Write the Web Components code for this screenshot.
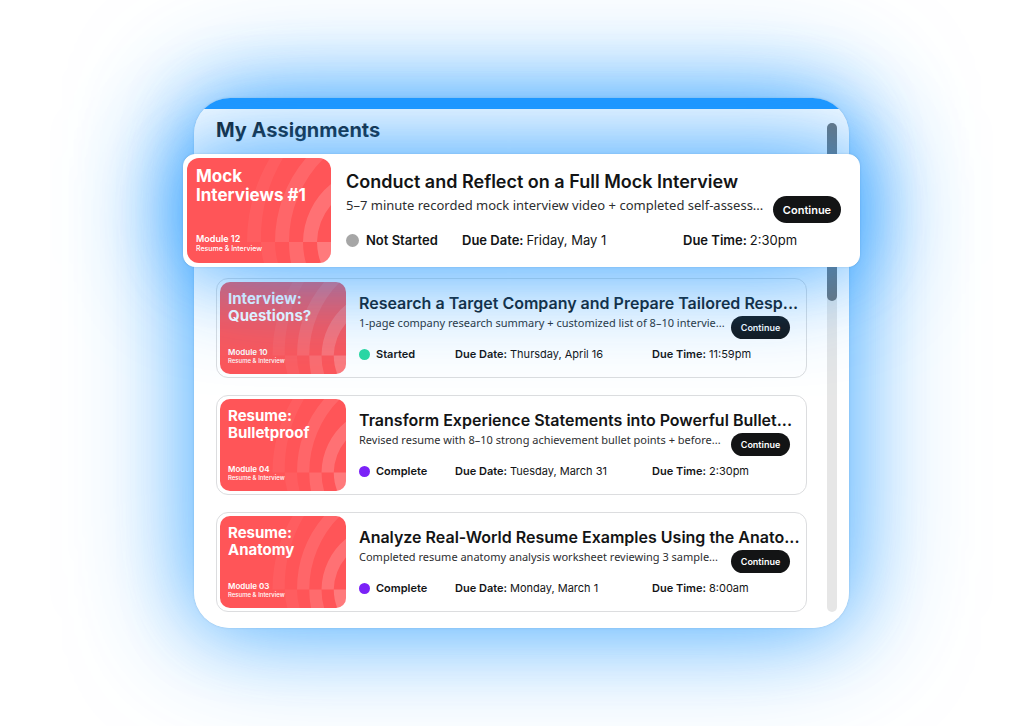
<!DOCTYPE html>
<html lang="en">
<head>
<meta charset="utf-8">
<meta name="viewport" content="width=device-width, initial-scale=1">
<title>My Assignments</title>
<style>
  html, body { margin: 0; min-height: 100%; }
  body { background: #fff; font-family: Inter, "Noto Sans", sans-serif; color: #131415; overflow-x: hidden; }
</style>
</head>
<body>
<assignments-page>
  <assignments-panel heading="My Assignments">
    <assignment-card slot="featured" featured status="Not Started" tone="idle" date="Friday, May 1" time="2:30pm" module="Module 12" track="Resume &amp; Interview">
      <span slot="cover">Mock<br>Interviews #1</span>
      <span slot="title">Conduct and Reflect on a Full Mock Interview</span>
      <span slot="summary">5–7 minute recorded mock interview video + completed self-assess...</span>
    </assignment-card>
    <assignment-card status="Started" tone="active" date="Thursday, April 16" time="11:59pm" module="Module 10" track="Resume &amp; Interview">
      <span slot="cover">Interview:<br>Questions?</span>
      <span slot="title">Research a Target Company and Prepare Tailored Resp...</span>
      <span slot="summary">1-page company research summary + customized list of 8–10 intervie...</span>
    </assignment-card>
    <assignment-card status="Complete" tone="done" date="Tuesday, March 31" time="2:30pm" module="Module 04" track="Resume &amp; Interview">
      <span slot="cover">Resume:<br>Bulletproof</span>
      <span slot="title">Transform Experience Statements into Powerful Bullet...</span>
      <span slot="summary">Revised resume with 8–10 strong achievement bullet points + before...</span>
    </assignment-card>
    <assignment-card status="Complete" tone="done" date="Monday, March 1" time="8:00am" module="Module 03" track="Resume &amp; Interview">
      <span slot="cover">Resume:<br>Anatomy</span>
      <span slot="title">Analyze Real-World Resume Examples Using the Anato...</span>
      <span slot="summary">Completed resume anatomy analysis worksheet reviewing 3 sample...</span>
    </assignment-card>
  </assignments-panel>
</assignments-page>

<template id="page-template">
  <style>
    :host { display: grid; grid-template-columns: 194fr 655fr 175fr; padding: 98px 0; }
    main { grid-column: 2; min-width: 0; }
  </style>
  <main><slot></slot></main>
</template>

<template id="panel-template">
  <style>
    :host { display: block; }
    section {
      display: grid;
      grid-template-columns: minmax(0, 1fr) 10px;
      column-gap: 20px;
      padding: 25px 12px 16px 22px;
      border-radius: 36px;
      background: linear-gradient(#1f98ff 11px, #fff 11px);
      box-shadow:
        0 0 120px rgba(31, 152, 255, .65),
        0 0 70px rgba(31, 152, 255, .4),
        0 0 2px rgba(60, 100, 140, .3);
    }
    h1 { grid-area: 1 / 1; margin: 0; padding-bottom: 17px; font-size: 20px; line-height: 14px; font-weight: 700; }
    .featured { grid-area: 2 / 1 / 3 / 3; position: relative; z-index: 1; margin: 0 -23px 0 -33px; }
    .list { grid-area: 3 / 1; display: grid; grid-template-columns: minmax(0, 1fr); gap: 17px; padding-top: 11px; }
    .track { grid-area: 1 / 2 / 4 / 3; background: #e6e6e6; border-radius: 5px; }
    .thumb { height: 178px; border-radius: 5px; background: #717171; }
  </style>
  <section aria-labelledby="heading">
    <h1 id="heading"></h1>
    <div class="track"><div class="thumb"></div></div>
    <div class="featured"><slot name="featured"></slot></div>
    <div class="list"><slot></slot></div>
  </section>
</template>

<template id="cover-template">
  <style>
    :host {
      position: relative;
      display: flex;
      flex-direction: column;
      box-sizing: border-box;
      overflow: hidden;
      border-radius: var(--cover-radius);
      background: #ff5558;
      color: #fff;
      padding: var(--cover-pad);
    }
    svg { position: absolute; inset: 0; width: 100%; height: 100%; }
    .name, .module, .track { position: relative; white-space: nowrap; }
    .name { font-weight: 700; font-size: var(--cover-size); line-height: var(--cover-line); flex: 1; }
    .module { font-weight: 600; font-size: var(--module-size); line-height: var(--module-line); }
    .track { font-weight: 500; font-size: var(--track-size); line-height: var(--track-line); }
  </style>
  <svg viewBox="0 0 144 105" preserveAspectRatio="none" fill="#fff" aria-hidden="true">
    <path opacity=".05" d="M60 84A165 165 0 0 1 83 0H96A158 158 0 0 0 74 84Z"/>
    <path opacity=".1" d="M88 84A129 129 0 0 1 119 0H137A118 118 0 0 0 102 84Z"/>
    <path opacity=".17" d="M116 84A76 76 0 0 1 144 26V47A60 60 0 0 0 130 84Z"/>
    <path opacity=".05" d="M74 84H88Q88 95 91 105H77Q74 95 74 84Z"/>
    <path opacity=".13" d="M102 84H116Q116 95 119 105H104Q102 95 102 84Z"/>
    <path opacity=".22" d="M130 84H144V105H134Q130 95 130 84Z"/>
  </svg>
  <div class="name"><slot></slot></div>
  <div class="module"></div>
  <div class="track"></div>
</template>

<template id="button-template">
  <style>
    :host { display: block; flex: none; }
    button {
      display: block;
      width: var(--button-width);
      height: var(--button-height);
      padding: 0;
      border: 0;
      border-radius: 14px;
      background: #131415;
      color: #fff;
      font: 600 var(--button-size)/16px Inter, sans-serif;
      cursor: pointer;
    }
  </style>
  <button type="button"><slot></slot></button>
</template>

<template id="card-template">
  <style>
    :host {
      display: block;
      --cover-width: 126px; --cover-height: 92px; --cover-radius: 10px; --cover-pad: 8px 8px 9px;
      --cover-size: 15px; --cover-line: 17px; --module-size: 8px; --module-line: 9px;
      --track-size: 6px; --track-line: 8px;
      --button-width: 59px; --button-height: 23px; --button-size: 9px;
      --title-size: 16px; --title-line: 22px; --summary-size: 11px; --summary-line: 16px;
      --summary-top: 1px; --action-row: 25px; --meta-top: 7px;
      --text-top: 10px; --text-gap: 13px; --text-right: 13px;
      --dot: 11px; --dot-gap: 6px;
      --meta-columns: minmax(0, 96fr) minmax(0, 197fr) minmax(0, 138fr);
    }
    :host([featured]) {
      --cover-width: 144px; --cover-height: 105px; --cover-radius: 12px; --cover-pad: 9px 9px 10px;
      --cover-size: 17px; --cover-line: 19px; --module-size: 9px; --module-line: 11px;
      --track-size: 7px; --track-line: 9px;
      --button-width: 68px; --button-height: 27px; --button-size: 11px;
      --title-size: 18px; --title-line: 24px; --summary-size: 13px; --summary-line: 18px;
      --summary-top: 2px; --action-row: 28px; --meta-top: 9px;
      --text-top: 12px; --text-gap: 15px; --text-right: 15px;
      --dot: 13px; --dot-gap: 7px;
      --meta-columns: minmax(0, 116fr) minmax(0, 221fr) minmax(0, 158fr);
    }
    article {
      display: flex;
      box-sizing: border-box;
      padding: 3px;
      border: 1px solid #dcdddf;
      border-radius: 12px;
    }
    :host([featured]) article {
      border-color: #fff;
      background: #fff;
      box-shadow:
        0 0 110px rgba(31, 152, 255, .85),
        0 0 60px rgba(31, 152, 255, .25),
        0 0 2px rgba(60, 100, 140, .3);
    }
    cover-art { flex: none; width: var(--cover-width); height: var(--cover-height); }
    .text { flex: 1; min-width: 0; padding: var(--text-top) var(--text-right) 0 var(--text-gap); }
    h2, p { margin: 0; white-space: nowrap; }
    h2 { font-size: var(--title-size); line-height: var(--title-line); font-weight: 600; }
    .action { display: flex; justify-content: space-between; height: var(--action-row); }
    p { min-width: 0; padding-top: var(--summary-top); font: 400 var(--summary-size)/var(--summary-line) "Noto Sans", sans-serif; color: #2d2e30; }
    pill-button { padding-top: 2px; }
    dl {
      display: grid;
      grid-template-columns: var(--meta-columns);
      margin: var(--meta-top) 0 0;
      font-size: var(--summary-size);
      line-height: var(--summary-line);
      white-space: nowrap;
    }
    dl div { display: flex; align-items: center; gap: 3px; min-width: 0; }
    dl .state { gap: var(--dot-gap); }
    dt, .state dd { font-weight: 600; }
    dd { margin: 0; }
    .dot { width: var(--dot); height: var(--dot); border-radius: 50%; background: #a6a6a6; }
    :host([tone="active"]) .dot { background: #2bd9a0; }
    :host([tone="done"]) .dot { background: #7b22f7; }
  </style>
  <article>
    <cover-art><slot name="cover"></slot></cover-art>
    <div class="text">
      <h2><slot name="title"></slot></h2>
      <div class="action">
        <p><slot name="summary"></slot></p>
        <pill-button>Continue</pill-button>
      </div>
      <dl>
        <div class="state"><dt class="dot" aria-label="Status"></dt><dd id="status"></dd></div>
        <div><dt>Due Date:</dt><dd id="date"></dd></div>
        <div><dt>Due Time:</dt><dd id="time"></dd></div>
      </dl>
    </div>
  </article>
</template>

<script>
  class TemplateElement extends HTMLElement {
    constructor() {
      super();
      const template = document.getElementById(this.constructor.template);
      this.attachShadow({ mode: 'open' }).append(template.content.cloneNode(true));
    }
    fill(selector, value) {
      this.shadowRoot.querySelector(selector).textContent = value || '';
    }
  }

  class AssignmentsPage extends TemplateElement { static template = 'page-template'; }

  class AssignmentsPanel extends TemplateElement {
    static template = 'panel-template';
    connectedCallback() { this.fill('#heading', this.getAttribute('heading')); }
  }

  class CoverArt extends TemplateElement {
    static template = 'cover-template';
    static observedAttributes = ['module', 'track'];
    attributeChangedCallback(name, previous, value) { this.fill('.' + name, value); }
  }

  class PillButton extends TemplateElement { static template = 'button-template'; }

  class AssignmentCard extends TemplateElement {
    static template = 'card-template';
    connectedCallback() {
      for (const name of ['status', 'date', 'time']) this.fill('#' + name, this.getAttribute(name));
      const cover = this.shadowRoot.querySelector('cover-art');
      for (const name of ['module', 'track']) cover.setAttribute(name, this.getAttribute(name) || '');
    }
  }

  customElements.define('cover-art', CoverArt);
  customElements.define('pill-button', PillButton);
  customElements.define('assignment-card', AssignmentCard);
  customElements.define('assignments-panel', AssignmentsPanel);
  customElements.define('assignments-page', AssignmentsPage);
</script>
</body>
</html>
